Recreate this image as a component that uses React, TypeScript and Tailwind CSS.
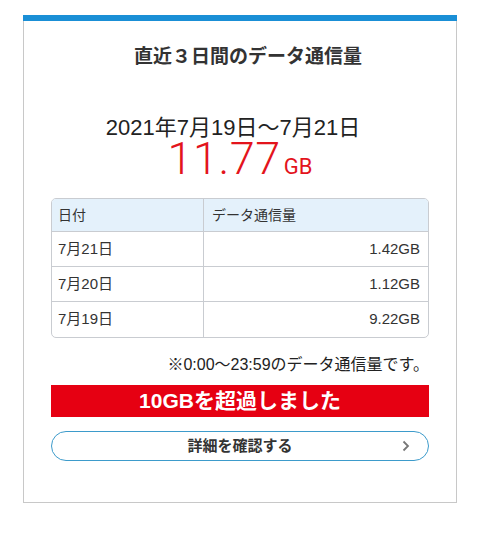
const font = { fontFamily: '"Liberation Sans", "Noto Sans CJK JP", sans-serif' };
const thin = { fontFamily: 'Roboto, "Liberation Sans", sans-serif' };

const rows = [
  { date: "7月21日", amount: "1.42GB" },
  { date: "7月20日", amount: "1.12GB" },
  { date: "7月19日", amount: "9.22GB" },
];

export default function App() {
  return (
    <div className="w-[480px] h-[533px] bg-white pt-[15px]" style={font}>
      <div className="mx-[23px] w-[434px] h-[488px] border-x border-b border-[#c8c8c8] flex flex-col">
        <div className="h-[6px] bg-[#1a8fd6] -mx-px" />
        <h1 className="mt-[22px] pl-[16px] text-center text-[19px] leading-[28px] font-bold text-[#333]">
          直近３日間のデータ通信量
        </h1>
        <p className="mt-[45px] text-center text-[22px] leading-[24px] text-[#222] pr-[14px]">
          2021年7月19日〜7月21日
        </p>
        <p className="text-center text-[#e3141c] leading-[38px] h-[38px]" style={thin}>
          <span className="text-[45px] font-light tracking-[0.5px]">11.77</span>
          <span className="text-[22px] ml-[3px]">GB</span>
        </p>
        <div className="mx-[27px] mt-[20px] border border-[#c9ccd1] rounded-[5px] overflow-hidden text-[15px] text-[#333]">
          <div className="flex h-[33px] bg-[#e4f1fb] items-center border-b border-[#c9ccd1] text-[14px]">
            <div className="w-[152px] pl-[6px] border-r border-[#c9ccd1] h-full flex items-center">日付</div>
            <div className="flex-1 pl-[8px]">データ通信量</div>
          </div>
          {rows.map((r, i) => (
            <div
              key={r.date}
              className={`flex h-[35px] items-center ${i < rows.length - 1 ? "border-b border-[#c9ccd1]" : ""}`}
            >
              <div className="w-[152px] pl-[6px] border-r border-[#c9ccd1] h-full flex items-center">{r.date}</div>
              <div className="flex-1 text-right pr-[8px]">{r.amount}</div>
            </div>
          ))}
        </div>
        <p className="mt-[16px] ml-[34px] mr-[27px] text-right text-[16px] leading-[22px] text-[#222]">
          ※0:00〜23:59のデータ通信量です。
        </p>
        <div className="mt-[9px] mx-[27px] h-[32px] bg-[#e60012] flex items-center justify-center text-white text-[21px] font-bold">
          10GBを超過しました
        </div>
        <button
          type="button"
          className="mt-[14px] mx-[27px] h-[30px] rounded-full border-[1.5px] border-[#3d9bcb] relative flex items-center justify-center text-[15px] font-bold text-[#333]"
        >
          詳細を確認する
          <svg
            className="absolute right-[18px] top-1/2 -translate-y-1/2"
            width="8"
            height="12"
            viewBox="0 0 8 12"
            fill="none"
          >
            <path d="M1.5 1.5 L6 6 L1.5 10.5" stroke="#777" strokeWidth="1.8" />
          </svg>
        </button>
      </div>
    </div>
  );
}
